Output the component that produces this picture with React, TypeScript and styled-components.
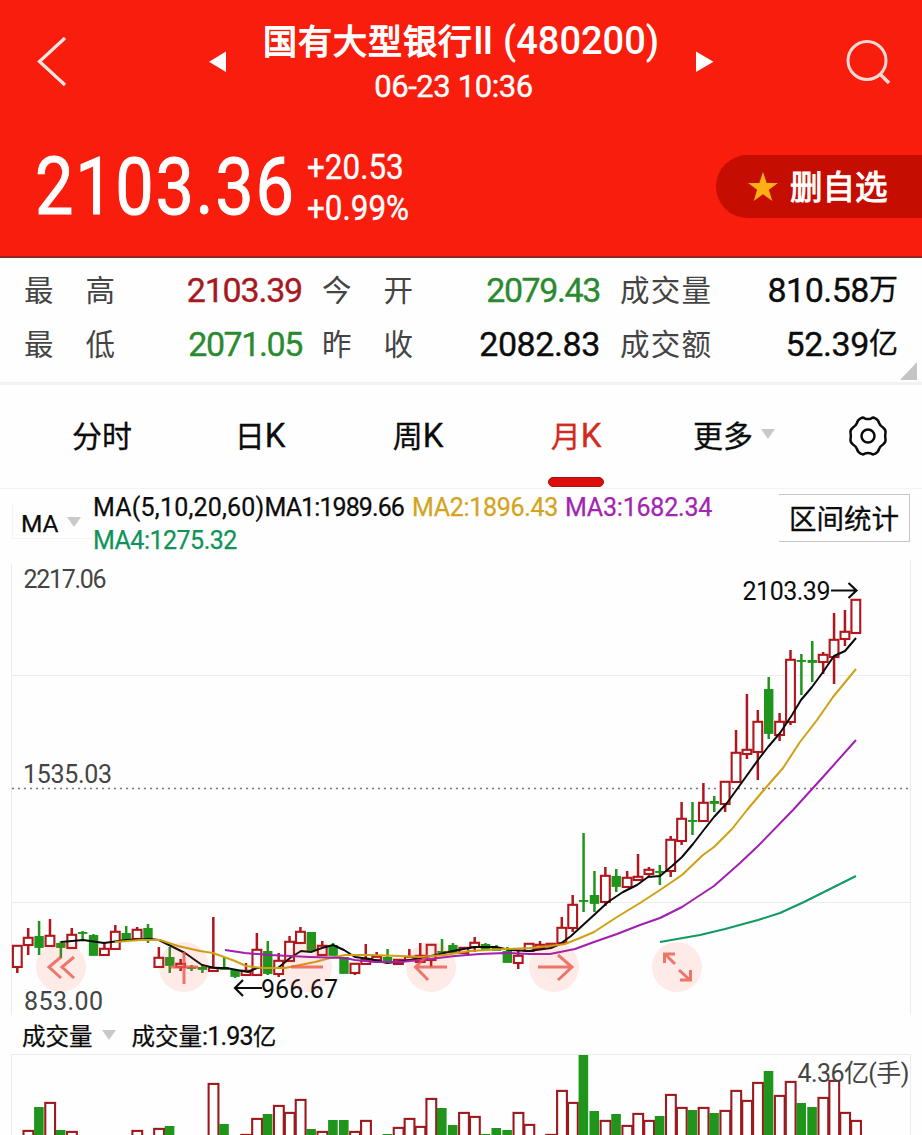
import React from "react";
import styled, { createGlobalStyle } from "styled-components";

const LATIN = '"Roboto", "Noto Sans CJK SC", sans-serif';
const CJK = '"Noto Sans CJK SC", sans-serif';
const RED = "#b0161c";
const GREEN = "#1f951c";

const GlobalStyle = createGlobalStyle`
  * { box-sizing: border-box; }
  body { margin: 0; background: #fefefe; font-family: ${LATIN}; }
`;

const Screen = styled.main`
  width: 922px;
  height: 1135px;
  overflow: hidden;
  display: flex;
  flex-direction: column;
  background: #fefefe;
  color: #0c0c0c;
`;

/* ---------- header ---------- */

const Header = styled.header`
  height: 258px;
  flex: none;
  background: #f91d0d;
  border-bottom: 2px solid #8e2a20;
  color: #fff;
`;

const NavRow = styled.div`
  display: flex;
  align-items: flex-start;
  height: 124px;
`;

const IconSlot = styled.div<{ $left: number; $top: number }>`
  flex: none;
  margin-left: ${(p) => p.$left}px;
  margin-top: ${(p) => p.$top}px;
  svg { display: block; }
`;

const TitleBlock = styled.div`
  flex: none;
  width: 470px;
  display: flex;
  flex-direction: column;
  align-items: center;
`;

const TitleLine = styled.h1`
  margin: 16px 0 0;
  height: 48px;
  font: 400 34px/48px ${CJK};
  white-space: nowrap;
  display: flex;
  align-items: baseline;
  padding-right: 4px;
`;

const TitleName = styled.span`
  letter-spacing: 1px;
  -webkit-text-stroke: 1.3px currentColor;
`;

const TitleCode = styled.span`
  font: 500 38px/48px ${LATIN};
  margin-left: 11px;
`;

const Roman = styled.span`
  font: 500 38px/48px ${LATIN};
  letter-spacing: -1.2px;
`;

const Stamp = styled.div`
  height: 40px;
  margin-top: 3px;
  padding-right: 19px;
  font: 400 31px/40px ${LATIN};
  letter-spacing: -0.4px;
  -webkit-text-stroke: 0.4px currentColor;
`;

const PriceRow = styled.div`
  display: flex;
  align-items: flex-start;
  height: 132px;
`;

const Price = styled.div`
  flex: none;
  width: 307px;
  padding-left: 35px;
  font: 400 80px/90px ${LATIN};
  letter-spacing: 2px;
  margin-top: 18px;
  span {
    display: inline-block;
    transform: scaleX(0.855);
    transform-origin: left;
    -webkit-text-stroke: 1px #fff;
  }
`;

const Changes = styled.div`
  flex: 1;
  margin-top: 23px;
  font: 400 35.5px/41px ${LATIN};
  -webkit-text-stroke: 0.4px currentColor;
  div {
    transform: scaleX(0.885);
    transform-origin: left;
  }
`;

const FavButton = styled.button`
  flex: none;
  width: 206px;
  height: 63px;
  margin-top: 31px;
  padding: 0 0 0 31px;
  border: 0;
  border-radius: 32px 0 0 32px;
  background: #c60d02;
  color: #fff;
  display: flex;
  align-items: center;
  gap: 11px;
  font: 400 32.5px/58px ${CJK};
  svg { display: block; }
  span { -webkit-text-stroke: 1px #fff; margin-top: -3px; }
`;

/* ---------- quote ---------- */

const Quotes = styled.section`
  position: relative;
  flex: none;
  height: 127px;
  padding: 6px 25px 0 24px;
  border-bottom: 3px solid #f3f3f3;
  display: grid;
  grid-template-columns: 278px 278px 278px;
  column-gap: 20px;
  grid-auto-rows: 54px;
`;

const Quote = styled.div`
  display: flex;
  justify-content: space-between;
  align-items: center;
`;

const QuoteLabel = styled.div`
  width: 91px;
  display: flex;
  justify-content: space-between;
  font: 400 29.5px/48px ${CJK};
  height: 54px;
  color: #444;
`;

const QuoteValue = styled.div<{ $color?: string; $spacing: number }>`
  display: flex;
  height: 54px;
  font: 400 34px/52px ${LATIN};
  letter-spacing: ${(p) => p.$spacing}px;
  color: ${(p) => p.$color ?? "#0c0c0c"};
  -webkit-text-stroke: 0.35px currentColor;
  white-space: nowrap;
  small { font: 400 29px/47px ${CJK}; letter-spacing: 0; }
`;

const Corner = styled.svg`
  position: absolute;
  right: 5px;
  bottom: 2px;
`;

/* ---------- tabs ---------- */

const Tabs = styled.nav`
  flex: none;
  height: 103px;
  display: flex;
  padding-left: 23px;
`;

const Tab = styled.div<{ $active?: boolean }>`
  width: 158px;
  display: flex;
  flex-direction: column;
  align-items: center;
  padding-top: 22px;
  font: 400 30px/54px ${CJK};
  color: ${(p) => (p.$active ? "#d22a20" : "#0c0c0c")};
  -webkit-text-stroke: 0.3px currentColor;
  white-space: nowrap;
  b { font: 400 33px/54px ${LATIN}; }
`;

const TabText = styled.div`
  display: flex;
  align-items: baseline;
  height: 54px;
`;

const Underline = styled.i`
  width: 56px;
  height: 10px;
  margin-top: 16px;
  border-radius: 5px;
  background: #dd0d0d;
  border: 1px solid #a31212;
`;

const Caret = styled.i<{ $ml: number }>`
  align-self: center;
  margin-left: ${(p) => p.$ml}px;
  border: 7px solid transparent;
  border-top: 10px solid #c9c9c9;
  border-bottom: 0;
`;

/* ---------- legend ---------- */

const LegendRow = styled.section`
  flex: none;
  height: 72px;
  display: flex;
  align-items: flex-start;
  border-top: 1px solid #f3f3f3;
`;

const MaSelect = styled.div`
  flex: none;
  width: 81px;
  height: 34px;
  margin: 16px 0 0 12px;
  padding-left: 8px;
  border: solid #f3f3f3;
  border-width: 0 0 1px 1px;
  display: flex;
  font: 400 24.5px/37px ${LATIN};
  -webkit-text-stroke: 0.25px currentColor;
`;

const Legend = styled.div`
  flex: none;
  width: 686px;
  padding-top: 2px;
  display: flex;
  flex-wrap: wrap;
  font: 400 25px/33px ${LATIN};
  white-space: nowrap;
`;

const LegendItem = styled.span<{ $width: number; $color?: string; $spacing: number }>`
  width: ${(p) => p.$width}px;
  color: ${(p) => p.$color ?? "#0c0c0c"};
  letter-spacing: ${(p) => p.$spacing}px;
  -webkit-text-stroke: 0.25px currentColor;
  i { font-style: normal; letter-spacing: 0.2px; }
`;

const RangeButton = styled.button`
  flex: none;
  width: 131px;
  height: 48px;
  margin-top: 5px;
  padding: 0 0 2px;
  border: 1.5px solid #c6c6c6;
  border-left: 0;
  background: #fefefe;
  color: #0c0c0c;
  font: 400 27.5px/42px ${CJK};
  -webkit-text-stroke: 0.3px currentColor;
`;

/* ---------- charts ---------- */

const ChartPanel = styled.section`
  position: relative;
  flex: none;
  height: 455px;
  svg { display: block; }
`;

const Controls = styled.div`
  position: absolute;
  left: 36px;
  top: 382px;
  display: flex;
  gap: 73.2px;
`;

const Control = styled.button`
  width: 50px;
  height: 50px;
  padding: 0;
  border: 0;
  border-radius: 50%;
  background: rgba(255, 80, 55, 0.115);
`;

const VolumeHead = styled.div`
  flex: none;
  height: 39px;
  display: flex;
  padding-left: 22px;
  font: 400 23.5px/40px ${CJK};
  -webkit-text-stroke: 0.25px currentColor;
`;

const VolumeText = styled.div`
  margin-left: 16px;
  display: flex;
  align-items: baseline;
  b { font: 400 25px/40px ${LATIN}; letter-spacing: -0.8px; }
`;

const VolumePanel = styled.section`
  flex: none;
  height: 81px;
  svg { display: block; }
`;

const ChartLabel = styled.text`
  font-family: ${LATIN};
  font-size: 25px;
`;

type Kind = "r" | "g";
// kind, high, body top, body bottom, low (screen rows)
type Candle = [Kind, number, number, number, number];

const candles: Candle[] = [
  ["r", 945, 945, 967, 973], ["r", 928, 937, 945, 955], ["g", 921, 936, 947, 955],
  ["r", 919, 935, 946, 947], ["g", 941, 943, 947, 958], ["r", 928, 934, 948, 948],
  ["g", 931, 932, 933, 940], ["g", 934, 935, 955, 955], ["r", 942, 948, 955, 955],
  ["r", 925, 931, 949, 949], ["g", 926, 933, 939, 942], ["r", 927, 929, 939, 939],
  ["g", 924, 928, 938, 943], ["r", 947, 957, 967, 967], ["g", 947, 957, 965, 973],
  ["r", 959, 963, 967, 971], ["g", 965, 967, 968, 971], ["g", 964, 967, 969, 973],
  ["r", 917, 967, 971, 971], ["g", 957, 967, 969, 970], ["g", 969, 970, 976, 978],
  ["r", 963, 970, 975, 975], ["r", 933, 949, 975, 975], ["g", 941, 951, 973, 975],
  ["r", 953, 960, 974, 977], ["r", 936, 941, 961, 961], ["r", 927, 931, 943, 943],
  ["g", 932, 932, 950, 950], ["r", 941, 945, 955, 955], ["g", 943, 945, 955, 955],
  ["g", 957, 957, 973, 973], ["r", 963, 963, 973, 975], ["r", 944, 959, 964, 964],
  ["r", 952, 956, 960, 960], ["g", 949, 957, 962, 962], ["r", 959, 959, 964, 964],
  ["r", 949, 956, 960, 960], ["r", 943, 955, 962, 962], ["r", 944, 944, 960, 967],
  ["g", 939, 951, 952, 953], ["g", 943, 945, 952, 954], ["r", 947, 947, 953, 953],
  ["r", 937, 942, 947, 952], ["g", 943, 944, 949, 949], ["g", 945, 947, 950, 950],
  ["g", 947, 951, 962, 962], ["r", 951, 955, 963, 969], ["r", 943, 943, 951, 951],
  ["r", 941, 944, 948, 948], ["r", 943, 943, 946, 946], ["r", 917, 927, 943, 943],
  ["r", 895, 904, 928, 932], ["g", 833, 900, 901, 912], ["g", 871, 895, 903, 912],
  ["r", 867, 875, 902, 906], ["g", 869, 876, 886, 892], ["r", 871, 877, 887, 887],
  ["r", 854, 876, 880, 880], ["r", 867, 869, 874, 877], ["g", 865, 871, 872, 885],
  ["r", 836, 839, 871, 877], ["r", 802, 818, 841, 845], ["g", 802, 820, 821, 835],
  ["r", 783, 802, 821, 821], ["g", 796, 801, 803, 812], ["r", 781, 781, 804, 812],
  ["r", 730, 752, 782, 782], ["r", 694, 749, 754, 759], ["r", 710, 721, 752, 780],
  ["g", 677, 689, 733, 739], ["r", 713, 721, 735, 741], ["r", 650, 659, 722, 725],
  ["g", 654, 660, 661, 695], ["g", 641, 660, 662, 682], ["r", 652, 654, 662, 674],
  ["r", 613, 639, 657, 684], ["r", 610, 631, 639, 646], ["r", 599, 599, 633, 633],
];

// index, bar top (screen rows)
const volumes: [number, number][] = [
  [1, 1130], [2, 1107], [3, 1102], [4, 1130], [5, 1131], [11, 1130], [13, 1128], [14, 1126],
  [18, 1083], [19, 1124], [21, 1134], [22, 1118], [23, 1114], [24, 1105], [25, 1112],
  [26, 1099], [27, 1129], [28, 1131], [29, 1120], [30, 1120], [31, 1131], [32, 1120],
  [34, 1134], [35, 1127], [36, 1118], [37, 1126], [38, 1098], [39, 1108], [40, 1125],
  [41, 1112], [42, 1116], [43, 1134], [44, 1128], [45, 1130], [46, 1112], [47, 1124],
  [49, 1134], [50, 1090], [51, 1102], [52, 1055], [53, 1111], [54, 1120], [55, 1114],
  [56, 1125], [57, 1113], [58, 1120], [59, 1116], [60, 1094], [61, 1107], [62, 1110],
  [63, 1107], [64, 1113], [65, 1110], [66, 1090], [67, 1100], [68, 1082], [69, 1071],
  [70, 1095], [71, 1081], [72, 1103], [73, 1107], [74, 1097], [75, 1080], [76, 1112],
  [77, 1120],
];

const xAt = (i: number) => 17.3 + i * 10.89;

const MA5 =
  "61,942 83,940 104,943 126,940 150,939 159,940 185,953 202,965 215,968 226,968 248,972 257,968 278,968 290,958 301,951 311,952 322,948 333,945 344,950 355,957 370,959 387,963 405,961 431,956 453,951 475,947 496,947 510,950 529,951 551,948 560,944 571,936 594,915 608,902 623,892 637,885 648,877 660,876 672,866 682,857 693,844 703,831 714,817 727,803 740,785 758,760 768,747 780,733 792,715 801,700 812,687 823,672 834,656 845,651 856,638";
const MA10 =
  "115,942 140,940 160,940 178,946 200,951 213,953 235,961 246,966 262,968 285,968 300,965 315,962 330,958 345,955 370,955 400,956 420,957 445,955 470,951 505,949 530,948 550,946 565,944 580,938 594,932 617,917 640,903 660,890 682,875 703,855 714,847 732,829 747,810 763,791 783,768 800,742 817,720 833,697 856,669";
const MA20 =
  "225,950 245,953 270,955 310,957 345,958 355,960 375,962 400,962 430,959 455,956 480,954 505,953 530,954 550,954 575,949 594,942 617,934 640,925 660,918 682,907 714,886 740,863 758,846 793,810 823,777 856,740";
const MA60 = "660,942 700,935 725,929 758,920 780,913 804,902 828,890 856,876";

const CandleMark = ({ index, data }: { index: number; data: Candle }) => {
  const [kind, high, top, bottom, low] = data;
  const x = xAt(index);
  const green = kind === "g";
  const color = green ? GREEN : RED;
  return (
    <g stroke={color} strokeWidth={2.5}>
      {high < top && <line x1={x} x2={x} y1={high} y2={top} />}
      {low > bottom && <line x1={x} x2={x} y1={bottom} y2={low} />}
      {green ? (
        <rect x={x - 4.7} width={9.4} y={top} height={bottom - top + 0.9} fill={color} stroke="none" />
      ) : (
        <rect x={x - 4.4} width={8.8} y={top + 0.8} height={Math.max(1.5, bottom - top - 0.8)} fill="#fff" strokeWidth={2.1} />
      )}
    </g>
  );
};

const PriceChart = () => (
  <svg width="922" height="455" viewBox="0 560 922 455">
    <g stroke="#ececec" strokeWidth="1">
      <line x1="11.5" x2="11.5" y1="564" y2="1015" />
      <line x1="910.5" x2="910.5" y1="560" y2="1015" />
      <line x1="12" x2="910" y1="675.5" y2="675.5" />
      <line x1="12" x2="910" y1="902.5" y2="902.5" />
    </g>
    <line x1="12" x2="910" y1="788.5" y2="788.5" stroke="#777" strokeWidth="1.4" strokeDasharray="2 4" />
    {candles.map((c, i) => (
      <CandleMark key={i} index={i} data={c} />
    ))}
    <g fill="none" strokeWidth="2" strokeLinejoin="round">
      <polyline points={MA5} stroke="#0a0a0a" />
      <polyline points={MA10} stroke="#cfa012" />
      <polyline points={MA20} stroke="#a01fb0" />
      <polyline points={MA60} stroke="#0f9a62" />
    </g>
    <ChartLabel x="23.5" y="587.5" fill="#444" textLength="83">2217.06</ChartLabel>
    <ChartLabel x="23" y="783" fill="#444" textLength="89">1535.03</ChartLabel>
    <ChartLabel x="24" y="1010" fill="#444" textLength="79">853.00</ChartLabel>
    <ChartLabel x="261" y="998" fill="#0c0c0c" textLength="77">966.67</ChartLabel>
    <ChartLabel x="742.5" y="600" fill="#0c0c0c" textLength="88">2103.39</ChartLabel>
    <g fill="none" stroke="#0c0c0c" strokeWidth="2.2">
      <path d="M262 988H236M243 980L235 988L243 996" />
      <path d="M831 590.5H856M848.5 583L856.5 590.5L848.5 598" />
    </g>
  </svg>
);

const controlIcons = [
  "M25 15L13 25L25 36M38 15L26 25L38 36",
  "M25 10V42M11 25H39",
  "M9 25H41",
  "M41 25H10M22 13L9.500 25L22 38",
  "M9 25H42M29 13L43 25L29 38",
  "M23 22L13 12M12.500 21V12H23M27 28L38 38M28 38H38.500V28",
];

const VolumeChart = () => (
  <svg width="922" height="81" viewBox="0 1054 922 81">
    <path d="M12 1054.5H910" stroke="#ececec" />
    <path d="M11.500 1054V1135M910.500 1054V1135" stroke="#ececec" />
    {volumes.map(([i, top]) => {
      const x = xAt(i);
      return candles[i][0] === "g" ? (
        <rect key={i} x={x - 5} width={9.6} y={top} height={90} fill={GREEN} />
      ) : (
        <rect key={i} x={x - 4.7} width={9.8} y={top + 0.9} height={90} fill="#fff" stroke="#9c1a1e" strokeWidth={2.1} />
      );
    })}
    <ChartLabel x="797.5" y="1081.5" fill="#444" textLength="112">4.36亿(手)</ChartLabel>
  </svg>
);

const quotes: { label: string; value: string; unit?: string; color?: string; spacing: number }[] = [
  { label: "最高", value: "2103.39", color: "#a8191f", spacing: -1.2 },
  { label: "今开", value: "2079.43", color: "#2b8a30", spacing: -1.4 },
  { label: "成交量", value: "810.58", unit: "万", spacing: -0.5 },
  { label: "最低", value: "2071.05", color: "#2b8a30", spacing: -1.4 },
  { label: "昨收", value: "2082.83", spacing: -0.4 },
  { label: "成交额", value: "52.39", unit: "亿", spacing: -0.4 },
];

export default function App() {
  return (
    <Screen>
      <GlobalStyle />
      <Header>
        <NavRow>
          <IconSlot $left={36} $top={35}>
            <svg width="32" height="54" viewBox="0 0 32 54" fill="none" stroke="#ffe6e0" strokeWidth="3.2">
              <path d="M29 3L3.500 26.500L29 50" />
            </svg>
          </IconSlot>
          <IconSlot $left={140} $top={51}>
            <svg width="20" height="22" viewBox="0 0 20 22" fill="#fff"><path d="M18 0.500V21L1 10.800Z" /></svg>
          </IconSlot>
          <TitleBlock>
            <TitleLine>
              <TitleName>国有大型银行</TitleName>
              <Roman>II</Roman>
              <TitleCode>(480200)</TitleCode>
            </TitleLine>
            <Stamp>06-23 10:36</Stamp>
          </TitleBlock>
          <IconSlot $left={-3} $top={51}>
            <svg width="20" height="22" viewBox="0 0 20 22" fill="#fff"><path d="M1 0.500V21L18.500 10.800Z" /></svg>
          </IconSlot>
          <IconSlot $left={130} $top={38}>
            <svg width="48" height="48" viewBox="0 0 48 48" fill="none" stroke="#ffd9d2" strokeWidth="3">
              <circle cx="22" cy="22.500" r="19" />
              <path d="M34.500 35.500L44 45" strokeWidth="3.600" />
            </svg>
          </IconSlot>
        </NavRow>
        <PriceRow>
          <Price><span>2103.36</span></Price>
          <Changes>
            <div>+20.53</div>
            <div>+0.99%</div>
          </Changes>
          <FavButton>
            <svg width="32" height="32" viewBox="0 0 32 32" fill="#ffae14">
              <path d="M16 1L19.700 12H31L21.900 18.700L25.300 30L16 23.300L6.700 30L10.100 18.700L1 12H12.300Z" />
            </svg>
            <span>删自选</span>
          </FavButton>
        </PriceRow>
      </Header>

      <Quotes>
        {quotes.map((q) => (
          <Quote key={q.label}>
            <QuoteLabel>
              {q.label.split("").map((ch) => (
                <span key={ch}>{ch}</span>
              ))}
            </QuoteLabel>
            <QuoteValue $color={q.color} $spacing={q.spacing}>
              {q.value}
              {q.unit && <small>{q.unit}</small>}
            </QuoteValue>
          </Quote>
        ))}
        <Corner width="17" height="18" viewBox="0 0 17 18"><path d="M17 0V18H0Z" fill="#c4c4c4" /></Corner>
      </Quotes>

      <Tabs>
        <Tab>分时</Tab>
        <Tab><TabText>日<b>K</b></TabText></Tab>
        <Tab><TabText>周<b>K</b></TabText></Tab>
        <Tab $active>
          <TabText>月<b>K</b></TabText>
          <Underline />
        </Tab>
        <Tab>
          <TabText>更多<Caret $ml={8} /></TabText>
        </Tab>
        <IconSlot $left={34} $top={30}>
          <svg width="42" height="42" viewBox="0 0 42 42" fill="none" stroke="#0c0c0c" strokeWidth="2.500">
            <circle cx="21" cy="21" r="6.500" />
            <path d="M14 3.200Q16 2 17.500 3.300Q21 4.900 24.500 3.300Q26 2 28 3.200Q31.500 5 32 8Q33 10.500 36 12.500Q39 15 38.500 17.500Q37.800 21 38.500 24.500Q39 27 36 29.500Q33 31.500 32 34Q31.500 37 28 38.800Q26 40 24.500 38.700Q21 37.100 17.500 38.700Q16 40 14 38.800Q10.500 37 10 34Q9 31.500 6 29.500Q3 27 3.500 24.500Q4.200 21 3.500 17.500Q3 15 6 12.500Q9 10.500 10 8Q10.500 5 14 3.200Z" />
          </svg>
        </IconSlot>
      </Tabs>

      <LegendRow>
        <MaSelect>MA<Caret $ml={8} /></MaSelect>
        <Legend>
          <LegendItem $width={319} $spacing={-0.9}>
            <i>MA(5,10,20,60)</i>MA1:1989.66
          </LegendItem>
          <LegendItem $width={153} $spacing={-0.3} $color="#d3a41c">MA2:1896.43</LegendItem>
          <LegendItem $width={155} $spacing={-0.2} $color="#a224b0">MA3:1682.34</LegendItem>
          <LegendItem $width={200} $spacing={-0.5} $color="#0e9458">MA4:1275.32</LegendItem>
        </Legend>
        <RangeButton>区间统计</RangeButton>
      </LegendRow>

      <ChartPanel>
        <PriceChart />
        <Controls>
          {controlIcons.map((d) => (
            <Control key={d}>
              <svg width="50" height="50" viewBox="0 0 50 50" fill="none" stroke="#e8594c" strokeOpacity="0.8" strokeWidth="3">
                <path d={d} />
              </svg>
            </Control>
          ))}
        </Controls>
      </ChartPanel>

      <VolumeHead>
        成交量
        <Caret $ml={9} />
        <VolumeText>成交量<b>:1.93</b>亿</VolumeText>
      </VolumeHead>
      <VolumePanel>
        <VolumeChart />
      </VolumePanel>
    </Screen>
  );
}
